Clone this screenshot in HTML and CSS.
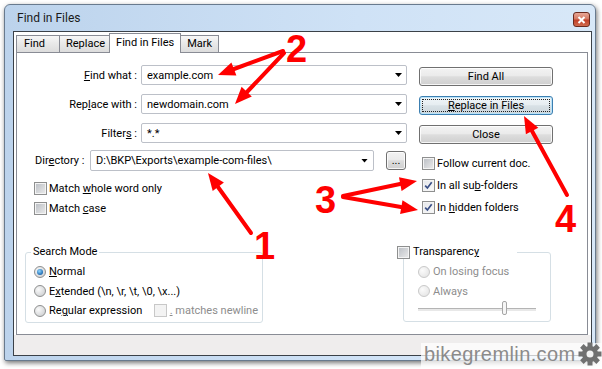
FILE: index.html
```html
<!DOCTYPE html>
<html lang="en">
    <head>
        <meta charset="UTF-8" />
        <title>Find in Files</title>
        <link rel="stylesheet" href="styles.css">
    </head>
    <body>
        <div class="window">
            <div class="titlebar">
                <span class="title">Find in Files</span>
                <span class="close-btn">
                    <svg width="9" height="8" viewBox="0 0 9 8"><path d="M1.5 1l6 6M7.5 1l-6 6" stroke="#fff" stroke-width="2" fill="none" /></svg>
                </span>
            </div>

            <div class="client">
                <div class="tabs">
                    <div class="tab">Find</div>
                    <div class="tab">Replace</div>
                    <div class="tab active">Find in Files</div>
                    <div class="tab">Mark</div>
                </div>

                <div class="panel">
                    <div class="top">
                        <div class="fields">
                            <div class="field-row">
                                <label class="field-label"><u>F</u>ind what :</label>
                                <div class="combo"><span>example.com</span><span class="caret"></span></div>
                            </div>
                            <div class="field-row">
                                <label class="field-label">Rep<u>l</u>ace with :</label>
                                <div class="combo"><span>newdomain.com</span><span class="caret"></span></div>
                            </div>
                            <div class="field-row">
                                <label class="field-label">Filter<u>s</u> :</label>
                                <div class="combo"><span>*.*</span><span class="caret"></span></div>
                            </div>
                        </div>
                        <div class="buttons">
                            <button class="btn">Find All</button>
                            <button class="btn default"><u>R</u>eplace in Files</button>
                            <button class="btn">Close</button>
                        </div>
                    </div>

                    <div class="middle">
                        <div class="left">
                            <div class="dir-row">
                                <label class="dir-label">Dir<u>e</u>ctory :</label>
                                <div class="combo dir"><span>D:\BKP\Exports\example-com-files\</span><span class="caret"></span></div>
                                <button class="btn browse">...</button>
                            </div>
                            <div class="left-checks">
                                <div class="check-row"><span class="checkbox"></span><span>Match <u>w</u>hole word only</span></div>
                                <div class="check-row"><span class="checkbox"></span><span>Match <u>c</u>ase</span></div>
                            </div>
                        </div>
                        <div class="right">
                            <div class="check-row"><span class="checkbox"></span><span>Follow current doc.</span></div>
                            <div class="check-row">
                                <span class="checkbox checked"><svg width="9" height="9" viewBox="0 0 9 9"><path d="M1.2 4.6l2.2 2.4 4.3-5.8" stroke="#3a4f86" stroke-width="1.7" fill="none" /></svg></span>
                                <span>In all su<u>b</u>-folders</span>
                            </div>
                            <div class="check-row">
                                <span class="checkbox checked"><svg width="9" height="9" viewBox="0 0 9 9"><path d="M1.2 4.6l2.2 2.4 4.3-5.8" stroke="#3a4f86" stroke-width="1.7" fill="none" /></svg></span>
                                <span>In <u>h</u>idden folders</span>
                            </div>
                        </div>
                    </div>

                    <div class="bottom">
                        <fieldset class="group search-mode">
                            <legend>Search Mode</legend>
                            <div class="radio-row"><span class="radio checked"></span><span><u>N</u>ormal</span></div>
                            <div class="radio-row"><span class="radio"></span><span>E<u>x</u>tended (\n, \r, \t, \0, \x...)</span></div>
                            <div class="radio-row">
                                <span class="radio"></span>
                                <span>Re<u>g</u>ular expression</span>
                                <span class="newline"><span class="checkbox disabled"></span><span><u>.</u> matches newline</span></span>
                            </div>
                        </fieldset>

                        <fieldset class="group transparency">
                            <legend><span class="checkbox"></span><span>Transparenc<u>y</u></span></legend>
                            <div class="radio-row muted"><span class="radio disabled"></span><span>On losing focus</span></div>
                            <div class="radio-row muted"><span class="radio disabled"></span><span>Always</span></div>
                            <div class="slider"><span class="thumb"></span></div>
                        </fieldset>
                    </div>
                </div>

                <div class="status"></div>
            </div>
        </div>

        <div class="watermark">
            <span>bikegremlin.com</span>
            <svg class="gear" width="24" height="24" viewBox="-12 -12 24 24">
                <g fill="#707070">
                    <circle r="8" />
                    <rect x="-2.5" y="-11.5" width="5" height="6" />
                    <rect x="-2.5" y="-11.5" width="5" height="6" transform="rotate(45)" />
                    <rect x="-2.5" y="-11.5" width="5" height="6" transform="rotate(90)" />
                    <rect x="-2.5" y="-11.5" width="5" height="6" transform="rotate(135)" />
                    <rect x="-2.5" y="-11.5" width="5" height="6" transform="rotate(180)" />
                    <rect x="-2.5" y="-11.5" width="5" height="6" transform="rotate(225)" />
                    <rect x="-2.5" y="-11.5" width="5" height="6" transform="rotate(270)" />
                    <rect x="-2.5" y="-11.5" width="5" height="6" transform="rotate(315)" />
                </g>
                <circle r="3.5" fill="#f2f2f2" />
            </svg>
        </div>

        <!-- red callouts drawn over the dialog -->
        <svg class="marks" width="602" height="369" viewBox="0 0 602 369">
            <g stroke="#f00" stroke-width="4" stroke-linecap="round">
                <line x1="283" y1="51" x2="234" y2="69" />
                <line x1="284" y1="53" x2="247" y2="92" />
                <line x1="251" y1="233" x2="218" y2="187" />
                <line x1="343" y1="196" x2="400" y2="184" />
                <line x1="343" y1="197" x2="401" y2="207" />
                <line x1="567" y1="195" x2="532" y2="131" />
            </g>
            <g fill="#f00">
                <polygon points="218,75 236.4,75.5 231.4,62.5" />
                <polygon points="235,104 251.8,96.4 241.6,86.8" />
                <polygon points="208,173 223.9,182.6 212.7,191" />
                <polygon points="417,181 401.6,191.1 399,177.3" />
                <polygon points="418,210 400.1,214 402.5,200.2" />
                <polygon points="524,116 538.3,127.7 525.9,134.3" />
            </g>
            <g class="mark-numbers" fill="#f00">
                <text x="286" y="62">2</text>
                <text x="254" y="259">1</text>
                <text x="315" y="213">3</text>
                <text x="555" y="232">4</text>
            </g>
        </svg>
    </body>
</html>
```

FILE: styles.css
```css
* {
    box-sizing: border-box;
}

body {
    margin: 0;
    width: 602px;
    height: 369px;
    overflow: hidden;
    position: relative;
    background: #fff;
    font-family: Roboto, "Noto Sans", sans-serif;
    font-size: 11px;
    color: #000;
}

/* window frame */
.window {
    margin: 4px 0 0 4px;
    width: 592px;
    height: 357px;
    border: 1px solid #687a8e;
    border-radius: 6px 6px 2px 2px;
    background: linear-gradient(to right, #bcd3ec, #cfe2f6 60%, #d8e8f8);
    box-shadow: 1px 2px 5px rgba(0, 0, 0, 0.55);
    display: flex;
    flex-direction: column;
}

.titlebar {
    height: 26px;
    display: flex;
    align-items: center;
    justify-content: space-between;
    padding: 0 5px 0 12px;
}

.title {
    font-size: 12px;
    color: #1a1a1a;
}

.close-btn {
    align-self: flex-start;
    margin-top: 7px;
    width: 17px;
    height: 15px;
    border: 1px solid #6a2a1f;
    border-radius: 3px;
    background: linear-gradient(#e9a898, #d47a64 45%, #c2412a 55%, #cf6a4d);
    display: flex;
    align-items: center;
    justify-content: center;
}

.client {
    flex: 1;
    margin: 0 3px 4px 8px;
    border: 1px solid #3b4148;
    background: #fff;
    display: flex;
    flex-direction: column;
}

/* tabs */
.tabs {
    display: flex;
    align-items: flex-end;
    height: 20px;
    margin-top: 1px;
    padding-left: 2px;
    position: relative;
    z-index: 1;
}

.tab {
    height: 17px;
    margin: 0 -1px 1px 0;
    padding: 0 6px;
    border: 1px solid #898c95;
    border-bottom: none;
    background: linear-gradient(#f7f7f7, #e8e8e8 50%, #dcdcdc);
    line-height: 16px;
}

.tab:first-child {
    min-width: 44px;
    padding-left: 7px;
}

.tab.active {
    height: 20px;
    margin: 0 -1px 0 -2px;
    background: #fff;
    line-height: 17px;
}

.panel {
    flex: 1;
    margin: -1px 3px 0 2px;
    border: 1px solid #898c95;
    background: #fff;
}

.status {
    height: 20px;
    background: #efeded;
}

/* top fields */
.top {
    display: flex;
    margin-top: 12px;
}

.fields {
    display: flex;
    flex-direction: column;
    gap: 9px;
}

.field-row {
    display: flex;
    align-items: center;
    height: 20px;
}

.field-label {
    width: 120px;
    margin-right: 4px;
    text-align: right;
}

.combo {
    width: 266px;
    height: 20px;
    padding: 0 4px 0 5px;
    border: 1px solid #bcc0c8;
    border-radius: 2px;
    background: #fff;
    display: flex;
    align-items: center;
    justify-content: space-between;
}

.caret {
    width: 7px;
    height: 4px;
    background: #000;
    clip-path: polygon(0 0, 100% 0, 50% 100%);
}

.buttons {
    width: 134px;
    margin: 2px 0 0 12px;
    display: flex;
    flex-direction: column;
    gap: 10px;
}

.btn {
    position: relative;
    height: 19px;
    padding: 0;
    border: 1px solid #707070;
    border-radius: 3px;
    background: linear-gradient(#f3f3f3, #ebebeb 45%, #dddddd 52%, #cfcfcf);
    box-shadow: inset 0 0 0 1px rgba(255, 255, 255, 0.8);
    font: inherit;
    color: #000;
}

.btn.default {
    border-color: #3c7fb1;
    box-shadow: inset 0 0 0 1px #b9e2f8;
    background: linear-gradient(#f1f6f9, #e6edf1 45%, #d8e1e6 52%, #cdd6dc);
}

.btn.default::before {
    content: "";
    position: absolute;
    inset: 2px;
    border: 1px dotted #222;
}

/* directory and options */
.middle {
    display: flex;
    margin-top: 6px;
}

.left {
    padding-left: 17px;
}

.dir-row {
    display: flex;
    align-items: center;
    height: 21px;
}

.dir-label {
    width: 56px;
    padding-left: 1px;
}

.combo.dir {
    width: 284px;
    height: 21px;
    padding-right: 5px;
}

.btn.browse {
    width: 20px;
    height: 19px;
    margin-left: 12px;
    line-height: 14px;
}

.left-checks {
    margin-top: 7px;
}

.check-row {
    display: flex;
    align-items: center;
    gap: 2px;
    height: 20px;
}

.right {
    margin-left: 16px;
    padding-top: 2px;
}

.right .check-row {
    height: 22px;
}

.checkbox {
    flex: none;
    width: 13px;
    height: 13px;
    border: 1px solid #8e8f8f;
    background: linear-gradient(135deg, #b9bdc3, #ececec);
    box-shadow: inset 0 0 0 1px #f4f4f4;
    display: inline-flex;
    align-items: center;
    justify-content: center;
}

.checkbox.checked {
    background: linear-gradient(135deg, #e4e6ea, #fafafa);
}

.checkbox.disabled {
    border-color: #c8c8c8;
    background: #f3f3f3;
    box-shadow: none;
}

.radio {
    flex: none;
    width: 12px;
    height: 12px;
    border: 1px solid #8e8f8f;
    border-radius: 50%;
    background: radial-gradient(circle at 35% 35%, #fafafa, #c6c8cb);
    display: flex;
    align-items: center;
    justify-content: center;
}

.radio.checked::after {
    content: "";
    width: 6px;
    height: 6px;
    border-radius: 50%;
    background: radial-gradient(circle at 40% 35%, #8fd6ff, #1b66ae 75%);
}

.radio.disabled {
    border-color: #c9c9c9;
    background: radial-gradient(circle at 35% 35%, #fbfbfb, #e1e1e1);
}

/* group boxes */
.bottom {
    display: flex;
    align-items: flex-start;
    gap: 140px;
    margin-top: 27px;
    padding-left: 8px;
}

.group {
    margin: 0;
    min-width: 0;
    padding: 3px 0 1px 8px;
    border: 1px solid #d5dfe5;
    border-radius: 3px;
}

.group legend {
    margin-left: -3px;
    padding: 0 2px;
    line-height: 14px;
}

.search-mode {
    width: 238px;
}

.radio-row {
    display: flex;
    align-items: center;
    gap: 3px;
    height: 19.5px;
}

.newline {
    margin: 0 4px 0 auto;
    display: flex;
    align-items: center;
    gap: 3px;
    color: #8d8d8d;
}

.transparency {
    width: 148px;
    padding: 3px 0 4px 14px;
}

.transparency legend {
    margin-left: -21px;
    padding: 0 38px 0 0;
    display: flex;
    align-items: center;
    gap: 3px;
}

.muted {
    color: #8d8d8d;
}

.slider {
    position: relative;
    width: 118px;
    height: 16px;
}

.slider::before {
    content: "";
    position: absolute;
    left: 0;
    right: 0;
    top: 7px;
    height: 2px;
    border-top: 1px solid #b4b4b4;
    background: #e8e8e8;
}

.thumb {
    position: absolute;
    left: 84px;
    top: 0;
    width: 5px;
    height: 14px;
    border: 1px solid #a6a6a6;
    border-radius: 2px;
    background: #f6f6f6;
}

/* overlays */
.watermark {
    position: absolute;
    left: 421px;
    top: 343px;
    width: 181px;
    height: 26px;
    padding-left: 3px;
    display: flex;
    align-items: flex-start;
    background: rgba(255, 255, 255, 0.72);
    font-family: "Liberation Sans", Arial, sans-serif;
    font-size: 20px;
    letter-spacing: 0.4px;
    color: #8b8b8b;
}

.gear {
    margin: -1px 0 0 auto;
}

.marks {
    position: absolute;
    left: 0;
    top: 0;
    pointer-events: none;
}

.mark-numbers {
    font-family: "Liberation Sans", Arial, sans-serif;
    font-weight: bold;
    font-size: 38px;
}
```
